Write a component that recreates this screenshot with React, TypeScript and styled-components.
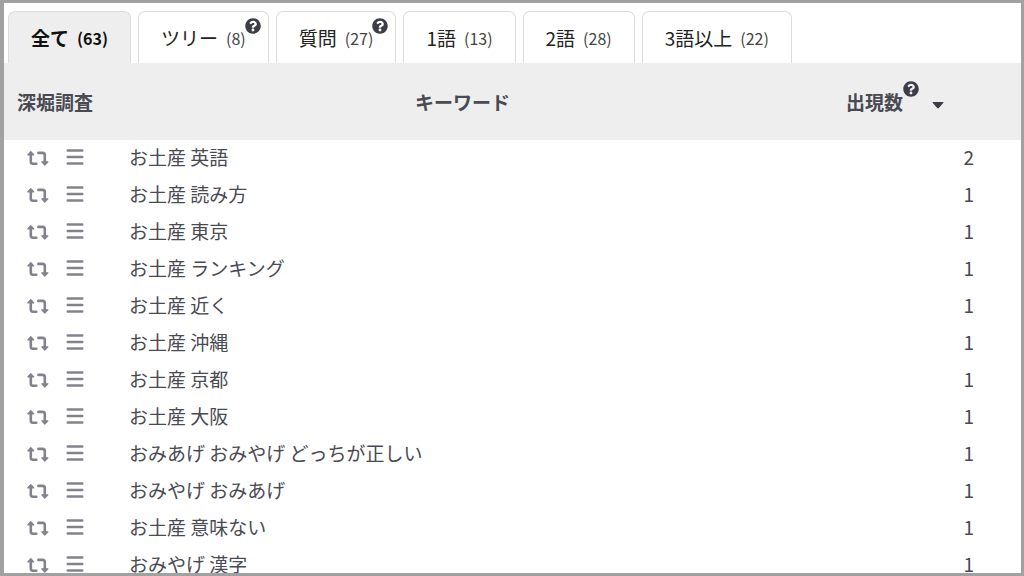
import React, { useState } from "react";
import styled, { createGlobalStyle, css } from "styled-components";
import { FaQuestionCircle } from "react-icons/fa";

const GlobalStyle = createGlobalStyle`
  *, *::before, *::after { box-sizing: border-box; }
  body {
    margin: 0;
    background: #fff;
    color: #494a52;
    font-family: "Noto Sans CJK JP", "Noto Sans", sans-serif;
    font-size: 19px;
    line-height: 28px;
  }
  button {
    margin: 0;
    padding: 0;
    border: 0;
    background: none;
    color: inherit;
    font: inherit;
    cursor: pointer;
  }
`;

const Frame = styled.main`
  height: 100vh;
  overflow: hidden;
  border: 3px solid #a1a1a1;
  border-left-width: 4px;
`;

const TabBar = styled.div`
  display: flex;
  gap: 7px;
  padding: 8px 4px 0;
`;

const Tab = styled.button<{ $active: boolean }>`
  position: relative;
  display: flex;
  align-items: center;
  gap: 8px;
  height: 52px;
  padding: 0 22px;
  border: 1px solid #dcdcdc;
  border-bottom: 0;
  border-radius: 7px 7px 0 0;
  background: #fff;
  color: #222;
  white-space: nowrap;
  ${(p) =>
    p.$active &&
    css`
      background: #eee;
      color: #111;
      font-weight: 700;
    `}
`;

const Count = styled.span<{ $active: boolean }>`
  font-size: 16px;
  color: ${(p) => (p.$active ? "#111" : "#444")};
`;

const HelpIcon = styled(FaQuestionCircle)`
  width: 16px;
  height: 16px;
  color: #3c3d46;
`;

const TabHelp = styled.span`
  position: absolute;
  top: 6px;
  right: 7px;
  display: flex;
`;

const Table = styled.table`
  width: 100%;
  table-layout: fixed;
  border-collapse: collapse;
`;

const HeadCell = styled.th<{ $width?: number; $align: string; $indent?: number }>`
  width: ${(p) => (p.$width ? `${p.$width}px` : "auto")};
  height: 77px;
  padding: 1px 0 0 ${(p) => p.$indent ?? 0}px;
  background: #eee;
  text-align: ${(p) => p.$align};
  font-weight: 700;
  white-space: nowrap;
`;

const SortButton = styled.button`
  display: flex;
  align-items: center;
  font-weight: 700;
`;

const SortHelp = styled.span`
  display: flex;
  padding-bottom: 26px;
`;

const Caret = styled.svg`
  width: 12px;
  height: 8px;
  margin: 6px 0 0 13px;
  fill: #3c3d46;
`;

const Row = styled.tr`
  height: 37px;
`;

const Cell = styled.td`
  padding: 0 0 3px 11px;
  white-space: nowrap;
`;

const ActionCell = styled(Cell)`
  padding-left: 22px;
`;

const NumberCell = styled(Cell)`
  padding-right: 47px;
  text-align: right;
`;

const Actions = styled.div`
  display: flex;
  align-items: center;
  gap: 16px;
`;

const IconButton = styled.button`
  display: flex;
  color: #82828f;
`;

const RetweetSvg = styled.svg`
  width: 24px;
  height: 20px;
`;

const MenuSvg = styled.svg`
  width: 18px;
  height: 20px;
`;

const RetweetIcon = () => (
  <RetweetSvg viewBox="0 0 24 20" aria-hidden="true">
    <g fill="none" stroke="currentColor" strokeWidth="2.6" strokeLinecap="round" strokeLinejoin="round">
      <path d="M4.8 7V14.5Q4.8 16.7 7 16.7H10.3" />
      <path d="M12.4 5.9H16.6Q18.8 5.9 18.8 8.1V15" />
    </g>
    <g fill="currentColor" stroke="currentColor" strokeWidth="1.2" strokeLinejoin="round">
      <path d="M1.8 7.8L4.8 4.6L7.8 7.8Z" />
      <path d="M15.8 14.8L18.8 18L21.8 14.8Z" />
    </g>
  </RetweetSvg>
);

const MenuIcon = () => (
  <MenuSvg viewBox="0 0 18 20" aria-hidden="true">
    <path
      d="M1.7 3.5H16.3M1.7 10H16.3M1.7 16.5H16.3"
      fill="none"
      stroke="currentColor"
      strokeWidth="2.4"
      strokeLinecap="round"
    />
  </MenuSvg>
);

const tabs = [
  { label: "全て", count: 63, help: false },
  { label: "ツリー", count: 8, help: true },
  { label: "質問", count: 27, help: true },
  { label: "1語", count: 13, help: false },
  { label: "2語", count: 28, help: false },
  { label: "3語以上", count: 22, help: false },
];

const keywords = [
  { word: "お土産 英語", hits: 2 },
  { word: "お土産 読み方", hits: 1 },
  { word: "お土産 東京", hits: 1 },
  { word: "お土産 ランキング", hits: 1 },
  { word: "お土産 近く", hits: 1 },
  { word: "お土産 沖縄", hits: 1 },
  { word: "お土産 京都", hits: 1 },
  { word: "お土産 大阪", hits: 1 },
  { word: "おみあげ おみやげ どっちが正しい", hits: 1 },
  { word: "おみやげ おみあげ", hits: 1 },
  { word: "お土産 意味ない", hits: 1 },
  { word: "おみやげ 漢字", hits: 1 },
];

export default function App() {
  const [active, setActive] = useState(0);
  return (
    <>
      <GlobalStyle />
      <Frame>
        <TabBar role="tablist">
          {tabs.map((t, i) => (
            <Tab
              key={t.label}
              type="button"
              role="tab"
              aria-selected={i === active}
              $active={i === active}
              onClick={() => setActive(i)}
            >
              {t.label}
              <Count $active={i === active}>({t.count})</Count>
              {t.help && (
                <TabHelp>
                  <HelpIcon aria-hidden="true" />
                </TabHelp>
              )}
            </Tab>
          ))}
        </TabBar>
        <Table>
          <thead>
            <tr>
              <HeadCell scope="col" $width={114} $align="left" $indent={13}>
                深堀調査
              </HeadCell>
              <HeadCell scope="col" $align="center">
                キーワード
              </HeadCell>
              <HeadCell scope="col" $width={214} $align="left" $indent={39}>
                <SortButton type="button">
                  出現数
                  <SortHelp>
                    <HelpIcon aria-hidden="true" />
                  </SortHelp>
                  <Caret viewBox="0 0 12 8" aria-hidden="true">
                    <path d="M1.2 1H10.8Q12 1 11.2 2L7 6.8Q6 7.8 5 6.8L.8 2Q0 1 1.2 1Z" />
                  </Caret>
                </SortButton>
              </HeadCell>
            </tr>
          </thead>
          <tbody>
            {keywords.map((k) => (
              <Row key={k.word}>
                <ActionCell>
                  <Actions>
                    <IconButton type="button" aria-label="再調査">
                      <RetweetIcon />
                    </IconButton>
                    <IconButton type="button" aria-label="メニュー">
                      <MenuIcon />
                    </IconButton>
                  </Actions>
                </ActionCell>
                <Cell>{k.word}</Cell>
                <NumberCell>{k.hits}</NumberCell>
              </Row>
            ))}
          </tbody>
        </Table>
      </Frame>
    </>
  );
}
